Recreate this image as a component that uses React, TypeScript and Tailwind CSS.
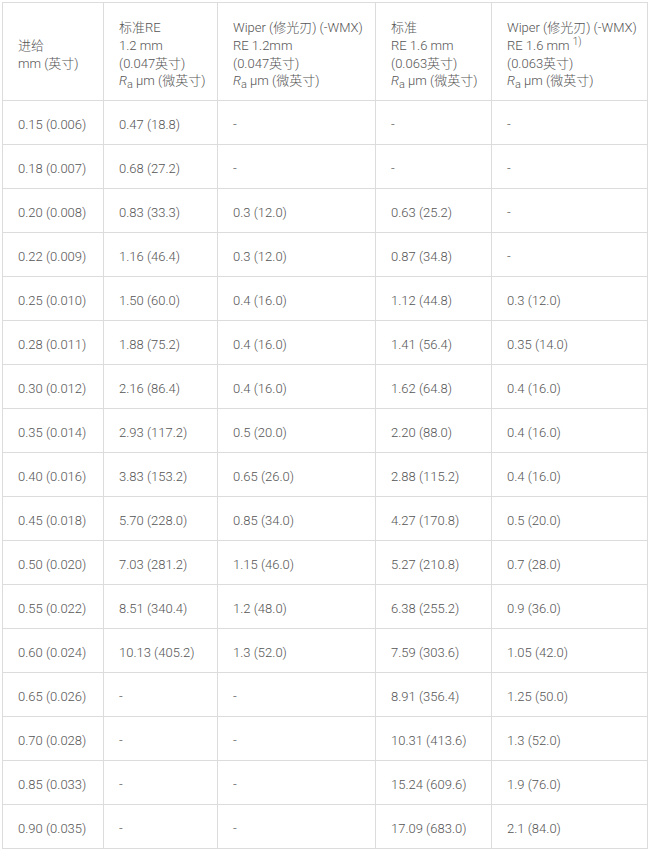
const rows: string[][] = [
  ['0.15 (0.006)', '0.47 (18.8)', '-', '-', '-'],
  ['0.18 (0.007)', '0.68 (27.2)', '-', '-', '-'],
  ['0.20 (0.008)', '0.83 (33.3)', '0.3 (12.0)', '0.63 (25.2)', '-'],
  ['0.22 (0.009)', '1.16 (46.4)', '0.3 (12.0)', '0.87 (34.8)', '-'],
  ['0.25 (0.010)', '1.50 (60.0)', '0.4 (16.0)', '1.12 (44.8)', '0.3 (12.0)'],
  ['0.28 (0.011)', '1.88 (75.2)', '0.4 (16.0)', '1.41 (56.4)', '0.35 (14.0)'],
  ['0.30 (0.012)', '2.16 (86.4)', '0.4 (16.0)', '1.62 (64.8)', '0.4 (16.0)'],
  ['0.35 (0.014)', '2.93 (117.2)', '0.5 (20.0)', '2.20 (88.0)', '0.4 (16.0)'],
  ['0.40 (0.016)', '3.83 (153.2)', '0.65 (26.0)', '2.88 (115.2)', '0.4 (16.0)'],
  ['0.45 (0.018)', '5.70 (228.0)', '0.85 (34.0)', '4.27 (170.8)', '0.5 (20.0)'],
  ['0.50 (0.020)', '7.03 (281.2)', '1.15 (46.0)', '5.27 (210.8)', '0.7 (28.0)'],
  ['0.55 (0.022)', '8.51 (340.4)', '1.2 (48.0)', '6.38 (255.2)', '0.9 (36.0)'],
  ['0.60 (0.024)', '10.13 (405.2)', '1.3 (52.0)', '7.59 (303.6)', '1.05 (42.0)'],
  ['0.65 (0.026)', '-', '-', '8.91 (356.4)', '1.25 (50.0)'],
  ['0.70 (0.028)', '-', '-', '10.31 (413.6)', '1.3 (52.0)'],
  ['0.85 (0.033)', '-', '-', '15.24 (609.6)', '1.9 (76.0)'],
  ['0.90 (0.035)', '-', '-', '17.09 (683.0)', '2.1 (84.0)'],
];

const Ra = () => (
  <>
    <i>R</i>
    <sub className="text-[11px]">a</sub> μm (微英寸)
  </>
);

const cell = 'border border-[#dcdcdc] px-[15px] align-middle whitespace-nowrap';

export default function App() {
  return (
    <div className="bg-white w-[651px] h-[852px] pt-[2px] pl-[2px]">
      <table
        className="table-fixed border-collapse w-[645px] text-[13px] leading-[17.7px] text-[#555] font-light"
        style={{ fontFamily: 'Roboto, "Noto Sans CJK SC", sans-serif' }}
      >
        <colgroup>
          <col className="w-[101px]" />
          <col className="w-[114px]" />
          <col className="w-[158px]" />
          <col className="w-[116px]" />
          <col className="w-[156px]" />
        </colgroup>
        <thead>
          <tr className="h-[98px]">
            <th className={`${cell} text-left font-light pt-[6px]`}>
              进给
              <br />
              mm (英寸)
            </th>
            <th className={`${cell} text-left font-light pt-[6px]`}>
              标准RE
              <br />
              1.2 mm
              <br />
              (0.047英寸)
              <br />
              <Ra />
            </th>
            <th className={`${cell} text-left font-light pt-[6px]`}>
              Wiper (修光刃) (-WMX)
              <br />
              RE 1.2mm
              <br />
              (0.047英寸)
              <br />
              <Ra />
            </th>
            <th className={`${cell} text-left font-light pt-[6px]`}>
              标准
              <br />
              RE 1.6 mm
              <br />
              (0.063英寸)
              <br />
              <Ra />
            </th>
            <th className={`${cell} text-left font-light pt-[6px]`}>
              Wiper (修光刃) (-WMX)
              <br />
              RE 1.6 mm <sup className="text-[10px]">1)</sup>
              <br />
              (0.063英寸)
              <br />
              <Ra />
            </th>
          </tr>
        </thead>
        <tbody>
          {rows.map((r) => (
            <tr key={r[0]} className="h-[44px]">
              {r.map((v, i) => (
                <td key={i} className={`${cell} pt-[5px]`}>
                  {v}
                </td>
              ))}
            </tr>
          ))}
        </tbody>
      </table>
    </div>
  );
}
